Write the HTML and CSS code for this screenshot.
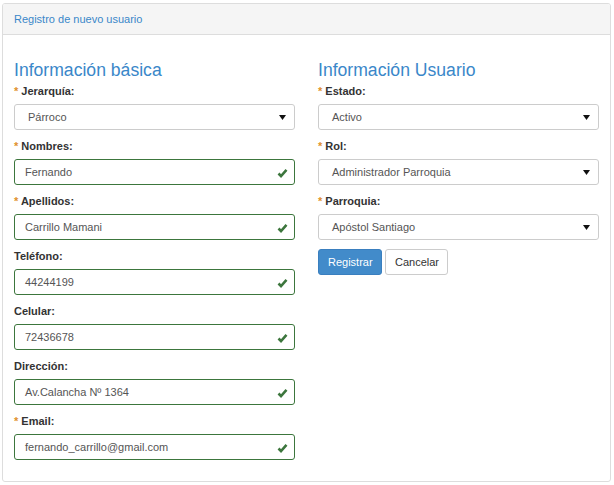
FILE: index.html
```html
<!DOCTYPE html>
<html lang="es">
<head>
<meta charset="utf-8">
<title>Registro de nuevo usuario</title>
<link rel="stylesheet" href="styles.css">
</head>
<body>
<div class="panel">
  <div class="panel-heading">Registro de nuevo usuario</div>
  <div class="panel-body">
    <div class="col">
      <h3 class="section-title">Información básica</h3>
      <div class="group">
        <label class="label"><span class="req">*</span> Jerarquía:</label>
        <div class="control select"><span class="value">Párroco</span><svg class="caret" width="7" height="5" viewBox="0 0 7 5"><path d="M0 0H7L3.5 5Z" fill="#111"/></svg></div>
      </div>
      <div class="group">
        <label class="label"><span class="req">*</span> Nombres:</label>
        <div class="control input valid"><span class="value">Fernando</span><svg class="check" width="11" height="10" viewBox="0 0 11 10"><path d="M1.5 5.5L4 8L9.5 1.8" fill="none" stroke="#3c763d" stroke-width="2.6"/></svg></div>
      </div>
      <div class="group">
        <label class="label"><span class="req">*</span> Apellidos:</label>
        <div class="control input valid"><span class="value">Carrillo Mamani</span><svg class="check" width="11" height="10" viewBox="0 0 11 10"><path d="M1.5 5.5L4 8L9.5 1.8" fill="none" stroke="#3c763d" stroke-width="2.6"/></svg></div>
      </div>
      <div class="group">
        <label class="label">Teléfono:</label>
        <div class="control input valid"><span class="value">44244199</span><svg class="check" width="11" height="10" viewBox="0 0 11 10"><path d="M1.5 5.5L4 8L9.5 1.8" fill="none" stroke="#3c763d" stroke-width="2.6"/></svg></div>
      </div>
      <div class="group">
        <label class="label">Celular:</label>
        <div class="control input valid"><span class="value">72436678</span><svg class="check" width="11" height="10" viewBox="0 0 11 10"><path d="M1.5 5.5L4 8L9.5 1.8" fill="none" stroke="#3c763d" stroke-width="2.6"/></svg></div>
      </div>
      <div class="group">
        <label class="label">Dirección:</label>
        <div class="control input valid"><span class="value">Av.Calancha Nº 1364</span><svg class="check" width="11" height="10" viewBox="0 0 11 10"><path d="M1.5 5.5L4 8L9.5 1.8" fill="none" stroke="#3c763d" stroke-width="2.6"/></svg></div>
      </div>
      <div class="group">
        <label class="label"><span class="req">*</span> Email:</label>
        <div class="control input valid"><span class="value">fernando_carrillo@gmail.com</span><svg class="check" width="11" height="10" viewBox="0 0 11 10"><path d="M1.5 5.5L4 8L9.5 1.8" fill="none" stroke="#3c763d" stroke-width="2.6"/></svg></div>
      </div>
    </div>
    <div class="col">
      <h3 class="section-title">Información Usuario</h3>
      <div class="group">
        <label class="label"><span class="req">*</span> Estado:</label>
        <div class="control select"><span class="value">Activo</span><svg class="caret" width="7" height="5" viewBox="0 0 7 5"><path d="M0 0H7L3.5 5Z" fill="#111"/></svg></div>
      </div>
      <div class="group">
        <label class="label"><span class="req">*</span> Rol:</label>
        <div class="control select"><span class="value">Administrador Parroquia</span><svg class="caret" width="7" height="5" viewBox="0 0 7 5"><path d="M0 0H7L3.5 5Z" fill="#111"/></svg></div>
      </div>
      <div class="group">
        <label class="label"><span class="req">*</span> Parroquia:</label>
        <div class="control select"><span class="value">Apóstol Santiago</span><svg class="caret" width="7" height="5" viewBox="0 0 7 5"><path d="M0 0H7L3.5 5Z" fill="#111"/></svg></div>
      </div>
      <div class="actions">
        <button class="btn btn-primary">Registrar</button>
        <button class="btn btn-default">Cancelar</button>
      </div>
    </div>
  </div>
</div>
</body>
</html>
```
FILE: styles.css
```css
* { box-sizing: border-box; }
html, body { background: #fff; }
body {
  margin: 3px 3px 2px 2px;
  font-family: "Liberation Sans", Arial, sans-serif;
  font-size: 11px;
  color: #333;
}
.panel {
  border: 1px solid #ddd;
  border-radius: 3px;
  height: 479px;
  overflow: hidden;
}
.panel-heading {
  height: 31px;
  background: #f5f5f5;
  border-bottom: 1px solid #ddd;
  color: #3a87c9;
  font-size: 11px;
  line-height: 30px;
  padding-left: 11px;
}
.panel-body {
  display: grid;
  grid-template-columns: 281px 281px;
  column-gap: 23px;
  padding: 23px 12px 0 11px;
}
.section-title {
  margin: 2px 0 4px;
  font-size: 17.6px;
  font-weight: normal;
  line-height: 20px;
  color: #3a87c9;
}
.group {
  margin-bottom: 9px;
}
.label {
  display: block;
  font-weight: bold;
  line-height: 15px;
  margin-bottom: 5px;
  color: #333;
}
.req { color: #e0902c; }
.control {
  position: relative;
  height: 26px;
  border: 1px solid #ccc;
  border-radius: 3px;
  display: flex;
  align-items: center;
  color: #555;
  background: #fff;
}
.select { padding-left: 13px; }
.input { padding-left: 10px; }
.valid { border-color: #3c763d; }
.caret {
  position: absolute;
  right: 8px;
  top: 10px;
}
.check {
  position: absolute;
  right: 6px;
  top: 8px;
}
.actions {
  display: flex;
  gap: 3px;
  margin-top: 4px;
}
.btn {
  height: 26px;
  font-family: "Liberation Sans", Arial, sans-serif;
  font-size: 11px;
  border-radius: 3px;
  border: 1px solid #ccc;
  padding: 0 9px;
  cursor: pointer;
}
.btn-primary {
  width: 64px;
  background: #428bca;
  border-color: #3a7fbf;
  color: #fff;
}
.btn-default {
  width: 63px;
  background: #fff;
  color: #333;
}
```
